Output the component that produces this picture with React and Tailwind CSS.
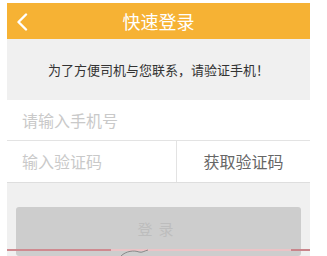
export default function App() {
  return (
    <div className="relative w-[327px] h-[256px] bg-white overflow-hidden" style={{ fontFamily: '"Noto Sans CJK SC", "Liberation Sans", sans-serif' }}>
      <div className="ml-[7px] mt-[3px] w-[303px] h-[253px] bg-[#f0f0f0] flex flex-col">
        {/* header */}
        <div className="relative h-[37px] bg-[#f6b234] flex items-center justify-center">
          <svg className="absolute left-[9px] top-[10px]" width="12" height="18" viewBox="0 0 12 18">
            <path d="M10 1.5 L2.5 9 L10 16.5" fill="none" stroke="#fff" strokeWidth="2.4" strokeLinecap="round" strokeLinejoin="round" />
          </svg>
          <span className="text-white text-[18px] leading-none">快速登录</span>
        </div>
        {/* tip */}
        <div className="h-[62px] flex items-center justify-center text-[13px] text-[#333]">
          为了方便司机与您联系，请验证手机！
        </div>
        {/* inputs */}
        <div className="bg-white">
          <div className="h-[41px] flex items-center pl-[15px] border-b border-[#e3e3e3] text-[16px] text-[#c9c9c9]">
            请输入手机号
          </div>
          <div className="h-[42px] flex border-b border-[#dedede]">
            <div className="w-[170px] flex items-center pl-[15px] text-[16px] text-[#c9c9c9] border-r border-[#e3e3e3]">
              输入验证码
            </div>
            <div className="flex-1 flex items-center justify-center text-[16px] text-[#666]">
              获取验证码
            </div>
          </div>
        </div>
        {/* button */}
        <div className="mt-[24px] mx-[9px] h-[50px] rounded-[3px] bg-[#cdcdcd] flex justify-center pt-[11px] text-[15px] tracking-[6px] text-[#bdbdbd]">
          登录
        </div>
      </div>
      {/* overlay line */}
      <div className="absolute left-[7px] top-[249px] w-[303px] h-[2px] bg-[#ecc3c6]" />
      <div className="absolute left-[7px] top-[249px] w-[104px] h-[2px] bg-[#cf8a90]" />
      <div className="absolute left-[291px] top-[249px] w-[19px] h-[2px] bg-[#c9858b]" />
      <svg className="absolute left-[120px] top-[249px]" width="30" height="8" viewBox="0 0 30 8">
        <path d="M1 7 C6 2 14 1 19 3 C22 4 24 2 28 1" fill="none" stroke="#777" strokeWidth="0.8" />
      </svg>
    </div>
  );
}
